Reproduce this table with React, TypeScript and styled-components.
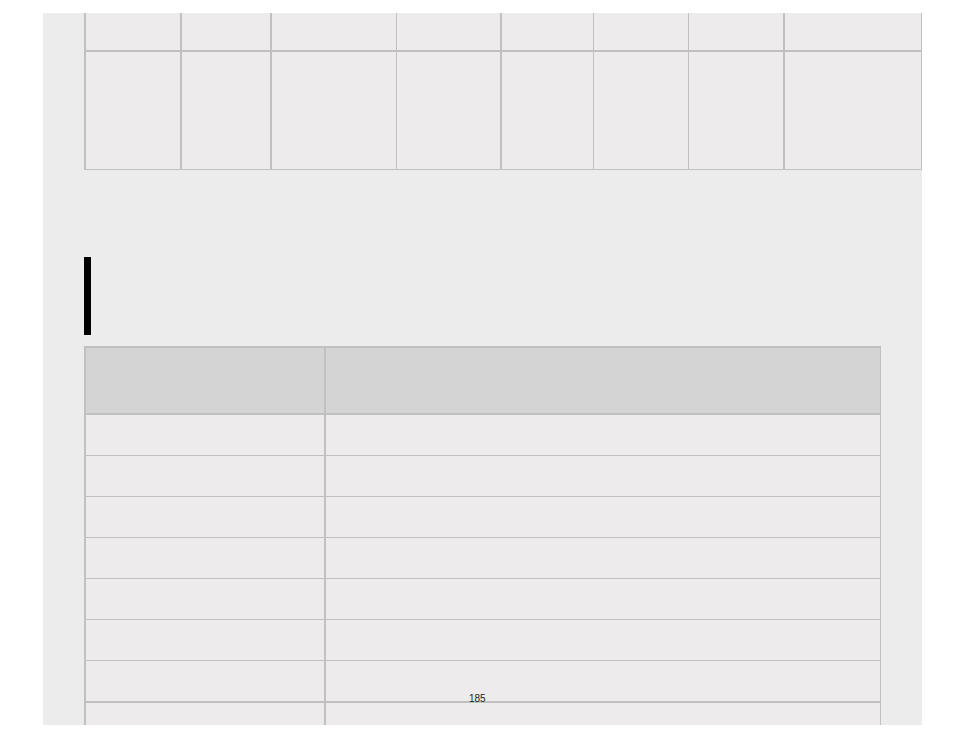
import React from "react";
import styled, { createGlobalStyle } from "styled-components";

const Global = createGlobalStyle`
  html, body { margin: 0; padding: 0; background: #ffffff; }
  body { font-family: "Liberation Sans", Arial, sans-serif; }
  * { box-sizing: border-box; }
`;

const Page = styled.div`
  position: relative;
  margin: 13px 0 0 43px;
  width: 879px;
  height: 712px;
  background: #ececec;
  overflow: hidden;
  padding-left: 41px;
  display: flex;
  flex-direction: column;
  align-items: flex-start;
`;

const LINE = "#c0c0c0";

const Grid = styled.div<{ $cols: string; $top?: number }>`
  display: grid;
  grid-template-columns: ${(p) => p.$cols};
  border-left: 2px solid ${LINE};
  border-top: ${(p) => (p.$top ? `${p.$top}px solid ${LINE}` : "none")};
  flex-shrink: 0;
`;

const Cell = styled.div<{ $h: number; $r: number; $b: number; $head?: boolean }>`
  height: ${(p) => p.$h}px;
  border-right: ${(p) => p.$r}px solid ${LINE};
  border-bottom: ${(p) => p.$b}px solid ${LINE};
  background: ${(p) => (p.$head ? "#d4d4d4" : "#edebec")};
`;

const Bar = styled.div`
  width: 7px;
  height: 78px;
  background: #000000;
  margin-top: 87px;
  flex-shrink: 0;
`;

const Second = styled(Grid)`
  margin-top: 11px;
`;

const PageNo = styled.div`
  position: absolute;
  left: 426px;
  top: 680px;
  font-family: "Liberation Sans", Arial, sans-serif;
  font-size: 10px;
  line-height: 12px;
  color: #222222;
`;

const topCols = [
  { w: 96, r: 2 },
  { w: 90, r: 2 },
  { w: 125, r: 1 },
  { w: 105, r: 2 },
  { w: 92, r: 1 },
  { w: 95, r: 1 },
  { w: 96, r: 2 },
  { w: 137, r: 1 },
];

const topRows = [
  { h: 39, b: 2 },
  { h: 118, b: 1 },
];

const secCols = [
  { w: 240, r: 2 },
  { w: 555, r: 1 },
];

const secRows = [
  { h: 67, b: 2, head: true },
  { h: 41, b: 1 },
  { h: 41, b: 1 },
  { h: 41, b: 1 },
  { h: 41, b: 1 },
  { h: 41, b: 1 },
  { h: 41, b: 1 },
  { h: 42, b: 2 },
  { h: 41, b: 1 },
  { h: 41, b: 1 },
];

export default function App() {
  return (
    <>
      <Global />
      <Page>
        <Grid $cols={topCols.map((c) => `${c.w}px`).join(" ")}>
          {topRows.map((row, ri) =>
            topCols.map((c, ci) => (
              <Cell key={`${ri}-${ci}`} $h={row.h} $r={c.r} $b={row.b} />
            ))
          )}
        </Grid>
        <Bar />
        <Second $cols={secCols.map((c) => `${c.w}px`).join(" ")} $top={2}>
          {secRows.map((row, ri) =>
            secCols.map((c, ci) => (
              <Cell
                key={`${ri}-${ci}`}
                $h={row.h}
                $r={c.r}
                $b={row.b}
                $head={row.head}
              />
            ))
          )}
        </Second>
        <PageNo>185</PageNo>
      </Page>
    </>
  );
}
